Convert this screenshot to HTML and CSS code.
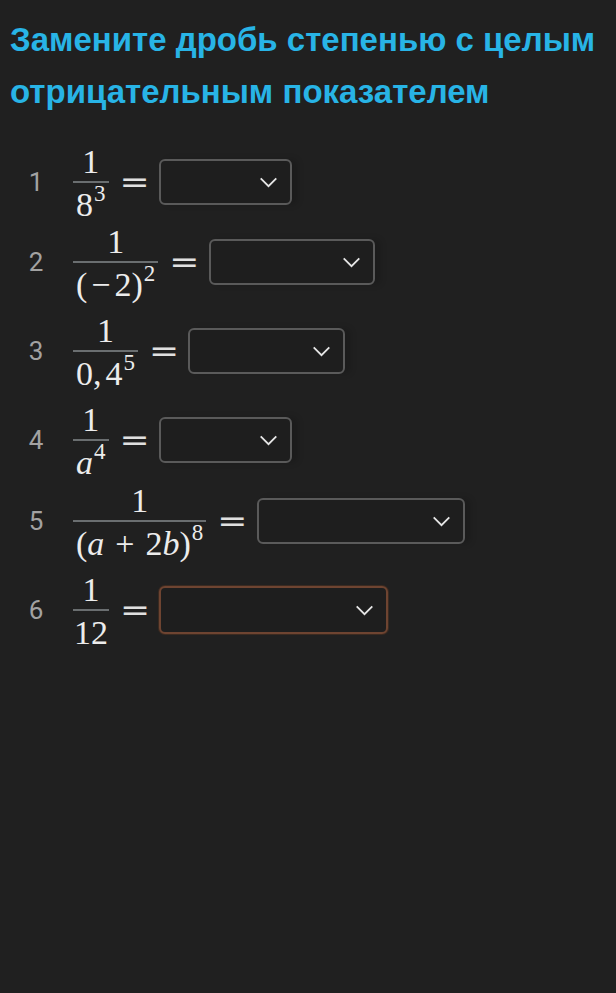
FILE: index.html
```html
<!DOCTYPE html>
<html lang="ru">
<head>
<meta charset="utf-8">
<title>Замените дробь степенью</title>
<link rel="stylesheet" href="styles.css">
</head>
<body>
<main class="task">
  <h1 class="task__title">Замените дробь степенью с целым отрицательным показателем</h1>
  <ol class="items">
    <li class="row">
      <span class="row__num">1</span>
      <span class="frac"><span class="frac__num">1</span><span class="frac__den">8<sup>3</sup></span></span>
      <span class="eq">=</span>
      <span class="select select--w133"><svg class="chev" viewBox="0 0 20 12"><path d="M1.5 1.5 L10 10 L18.5 1.5"/></svg></span>
    </li>
    <li class="row">
      <span class="row__num">2</span>
      <span class="frac"><span class="frac__num">1</span><span class="frac__den">(<span class="op op--unary">−</span>2)<sup>2</sup></span></span>
      <span class="eq">=</span>
      <span class="select select--w166"><svg class="chev" viewBox="0 0 20 12"><path d="M1.5 1.5 L10 10 L18.5 1.5"/></svg></span>
    </li>
    <li class="row row--spaced">
      <span class="row__num">3</span>
      <span class="frac"><span class="frac__num">1</span><span class="frac__den">0,<span class="op op--comma"></span>4<sup>5</sup></span></span>
      <span class="eq">=</span>
      <span class="select select--w157"><svg class="chev" viewBox="0 0 20 12"><path d="M1.5 1.5 L10 10 L18.5 1.5"/></svg></span>
    </li>
    <li class="row row--spaced">
      <span class="row__num">4</span>
      <span class="frac"><span class="frac__num">1</span><span class="frac__den"><i>a</i><sup>4</sup></span></span>
      <span class="eq">=</span>
      <span class="select select--w133"><svg class="chev" viewBox="0 0 20 12"><path d="M1.5 1.5 L10 10 L18.5 1.5"/></svg></span>
    </li>
    <li class="row row--near">
      <span class="row__num">5</span>
      <span class="frac"><span class="frac__num">1</span><span class="frac__den">(<i>a</i><span class="op op--bin">+</span>2<i>b</i>)<sup>8</sup></span></span>
      <span class="eq">=</span>
      <span class="select select--w208"><svg class="chev" viewBox="0 0 20 12"><path d="M1.5 1.5 L10 10 L18.5 1.5"/></svg></span>
    </li>
    <li class="row row--spaced">
      <span class="row__num">6</span>
      <span class="frac"><span class="frac__num">1</span><span class="frac__den frac__den--tight">12</span></span>
      <span class="eq">=</span>
      <span class="select select--w229 select--error"><svg class="chev" viewBox="0 0 20 12"><path d="M1.5 1.5 L10 10 L18.5 1.5"/></svg></span>
    </li>
  </ol>
</main>
</body>
</html>
```

FILE: styles.css
```css
html, body {
  margin: 0;
  padding: 0;
  background: #202020;
  min-height: 100%;
}

body {
  width: 616px;
  height: 993px;
  overflow: hidden;
  font-family: Roboto, "Liberation Sans", sans-serif;
}

.task {
  padding: 14px 10px 0 10px;
}

.task__title {
  margin: 0;
  font-family: "Liberation Sans", Arial, sans-serif;
  font-weight: 700;
  font-size: 33px;
  line-height: 52px;
  color: #28b4e6;
  letter-spacing: 0;
}

.items {
  list-style: none;
  margin: 24px 0 0 0;
  padding: 0;
}

.row {
  display: flex;
  align-items: center;
  height: 80px;
}

.row--spaced {
  margin-top: 9px;
}

.row--near {
  margin-top: 1px;
}

.row__num {
  width: 52px;
  text-align: center;
  font-size: 26px;
  color: #a2a2a2;
  margin-right: 11px;
}

.frac {
  display: inline-flex;
  flex-direction: column;
  align-items: stretch;
  font-family: "Liberation Serif", "DejaVu Serif", serif;
  font-size: 34px;
  color: #ececec;
}

.frac__num,
.frac__den {
  display: block;
  height: 36px;
  text-align: center;
  padding: 0 3px;
  white-space: nowrap;
}

.frac__num {
  border-bottom: 2px solid #6a6e70;
  line-height: 34px;
}

.frac__den {
  line-height: 44px;
}

.frac__den--tight {
  padding: 0 1px;
}

.frac i {
  font-style: italic;
}

.op--unary {
  display: inline-block;
  margin: 0 4px;
}

.op--bin {
  display: inline-block;
  margin: 0 11px;
}

.op--comma {
  display: inline-block;
  width: 4px;
}

.frac sup {
  font-size: 23px;
  line-height: 0;
  position: relative;
  top: -3px;
  margin-left: 1px;
}

.eq {
  font-family: "DejaVu Sans", sans-serif;
  font-size: 36px;
  line-height: 1;
  color: #e0e0e0;
  margin: 0 9px 0 11px;
  transform: scaleY(0.85);
}

.select {
  box-sizing: border-box;
  height: 46px;
  border: 2px solid #5a5a5a;
  border-radius: 6px;
  background: #1e1e1e;
  box-shadow: 6px 0 6px rgba(0, 0, 0, 0.15);
  display: flex;
  align-items: center;
  justify-content: flex-end;
  padding-right: 12px;
}

.select--error {
  border-color: #6e4431;
  box-shadow: 0 0 0 1px #3b2a20;
  height: 48px;
}

.select--w133 { width: 133px; }
.select--w157 { width: 157px; }
.select--w166 { width: 166px; }
.select--w208 { width: 208px; }
.select--w229 { width: 229px; }

.chev {
  width: 19px;
  height: 11px;
  fill: none;
  stroke: #e6e6e6;
  stroke-width: 2;
}
```
